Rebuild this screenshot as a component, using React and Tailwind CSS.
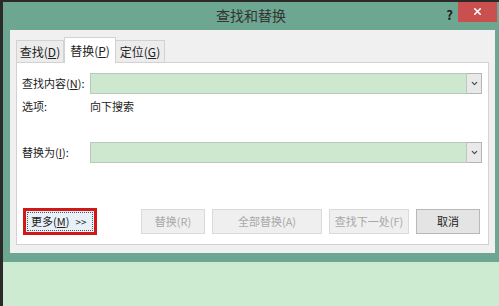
import { ChevronDown, X } from 'lucide-react';

const font = { fontFamily: '"Microsoft YaHei", "Noto Sans CJK SC", "Liberation Sans", sans-serif' };

const Combo = () => (
  <div className="flex h-[21px] w-[392px] shrink-0">
    <div className="flex-1 border border-[#b9c9bb] bg-[#cde8cf]" />
    <div className="flex w-[15px] items-center justify-center border border-l-0 border-[#b5b5b5] bg-[#e9e9e9]">
      <ChevronDown className="h-[9px] w-[9px] text-[#444]" strokeWidth={3} />
    </div>
  </div>
);

const Btn = ({ w, children, disabled }) => (
  <div
    className={`flex h-[25px] items-center justify-center whitespace-nowrap border text-[11px] ${w} ${
      disabled ? 'border-[#dadada] bg-[#efefef] text-[#a8a8a8]' : 'border-[#b8b8b8] bg-[#e4e4e4] text-[#222]'
    }`}
  >
    {children}
  </div>
);

const App = () => {
  return (
    <div className="h-[306px] w-[499px] overflow-hidden border-l-[3px] border-t-[2px] border-[#2a2a2a] bg-[#cdebd0]" style={font}>
      {/* Window */}
      <div className="flex h-[260px] flex-col bg-[#6da791]">
        {/* Title bar */}
        <div className="relative flex h-[28px] items-center justify-center pb-[2px]">
          <span className="text-[14px] text-[#333]">查找和替换</span>
          <span className="absolute right-[46px] top-[3px] text-[13px] font-bold text-[#222]">?</span>
          <div className="absolute right-[2px] top-[-2px] flex h-[22px] w-[39px] items-center justify-center bg-[#c9504f]">
            <X className="h-[11px] w-[11px] text-white" strokeWidth={3.5} />
          </div>
        </div>

        {/* Body */}
        <div className="ml-[7px] mr-[4px] flex h-[223px] flex-col bg-[#f0f0f0] px-[6px] pt-[7px]">
          {/* Tabs */}
          <div className="flex h-[25px] items-end whitespace-nowrap text-[12px] text-[#222]">
            <div className="flex h-[22px] w-[48px] items-center justify-center border border-b-0 border-[#d2d2d2] bg-[#ececec]">
              查找(<span className="underline">D</span>)
            </div>
            <div className="relative z-10 -mb-px flex h-[26px] w-[52px] items-center justify-center border border-b-0 border-[#d2d2d2] bg-white">
              替换(<span className="underline">P</span>)
            </div>
            <div className="flex h-[22px] w-[49px] items-center justify-center border border-b-0 border-l-0 border-[#d2d2d2] bg-[#ececec]">
              定位(<span className="underline">G</span>)
            </div>
          </div>

          {/* Panel */}
          <div className="flex h-[183px] flex-col whitespace-nowrap border border-[#d2d2d2] bg-white pl-[5px] text-[11px] text-[#222]">
            <div className="mt-[10px] flex items-center">
              <span className="w-[68px] shrink-0">
                查找内容(<span className="underline">N</span>):
              </span>
              <Combo />
            </div>
            <div className="mt-[3px] flex h-[18px] items-center">
              <span className="w-[68px] shrink-0">选项:</span>
              <span>向下搜索</span>
            </div>
            <div className="mt-[27px] flex items-center">
              <span className="w-[68px] shrink-0">
                替换为(<span className="underline">I</span>):
              </span>
              <Combo />
            </div>

            {/* Buttons */}
            <div className="mt-[45px] flex items-center">
              <div className="ml-[1px] flex h-[27px] w-[74px] shrink-0 items-center border-[3px] border-[#d01818] bg-[#e8f1f8] p-px">
                <div className="flex h-full w-full items-center border border-dotted border-[#555] pl-[3px] text-[11px] text-[#222]">
                  更多(<span className="underline">M</span>)<span className="ml-[6px] text-[10px]">&gt;&gt;</span>
                </div>
              </div>
              <div className="ml-[44px] flex gap-[7px]">
                <Btn w="w-[64px]" disabled>替换(R)</Btn>
                <Btn w="w-[110px]" disabled>全部替换(A)</Btn>
                <Btn w="w-[80px]" disabled>查找下一处(F)</Btn>
                <Btn w="w-[64px]">取消</Btn>
              </div>
            </div>
          </div>
        </div>
      </div>
    </div>
  );
};

export default App;
